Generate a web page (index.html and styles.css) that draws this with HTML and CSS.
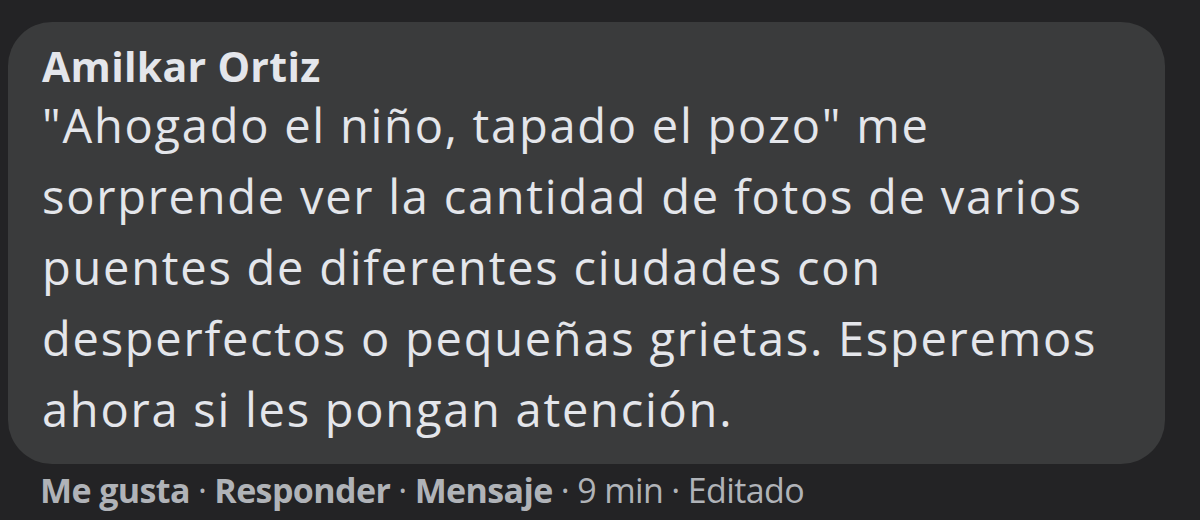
FILE: index.html
```html
<!DOCTYPE html>
<html>
<head>
<title>Comentario</title>
<link rel="stylesheet" href="styles.css">
</head>
<body>
  <div class="comment">
    <div class="bubble">
      <div class="author">Amilkar Ortiz</div>
      <div class="text">"Ahogado el niño, tapado el pozo" me sorprende ver la cantidad de fotos de varios puentes de diferentes ciudades con desperfectos o pequeñas grietas. Esperemos ahora si les pongan atención.</div>
    </div>
    <div class="actions">
      <span class="link">Me gusta</span>
      <span class="dot">·</span>
      <span class="link">Responder</span>
      <span class="dot">·</span>
      <span class="link">Mensaje</span>
      <span class="dot">·</span>
      <span>9 min</span>
      <span class="dot">·</span>
      <span>Editado</span>
    </div>
  </div>
</body>
</html>
```

FILE: styles.css
```css
body {
  margin: 0;
  height: 100vh;
  background: #232325;
  font-family: 'Open Sans', sans-serif;
  color: #e4e6eb;
  overflow: hidden;
}

.comment {
  padding: 22px 0 0 8px;
}

.bubble {
  width: 1157px;
  height: 442px;
  box-sizing: border-box;
  padding: 20px 30px 0 34px;
  background: #3a3b3c;
  border-radius: 44px;
}

.author {
  font-weight: 700;
  font-size: 41px;
  line-height: 48px;
  letter-spacing: 0.3px;
}

.text {
  font-size: 47px;
  line-height: 71px;
  letter-spacing: 1.75px;
}

.actions {
  display: flex;
  gap: 8px;
  padding: 6px 0 0 32px;
  font-size: 34px;
  line-height: 40px;
  color: #b0b3b8;
  letter-spacing: -0.6px;
}

.link {
  font-weight: 700;
}
```
